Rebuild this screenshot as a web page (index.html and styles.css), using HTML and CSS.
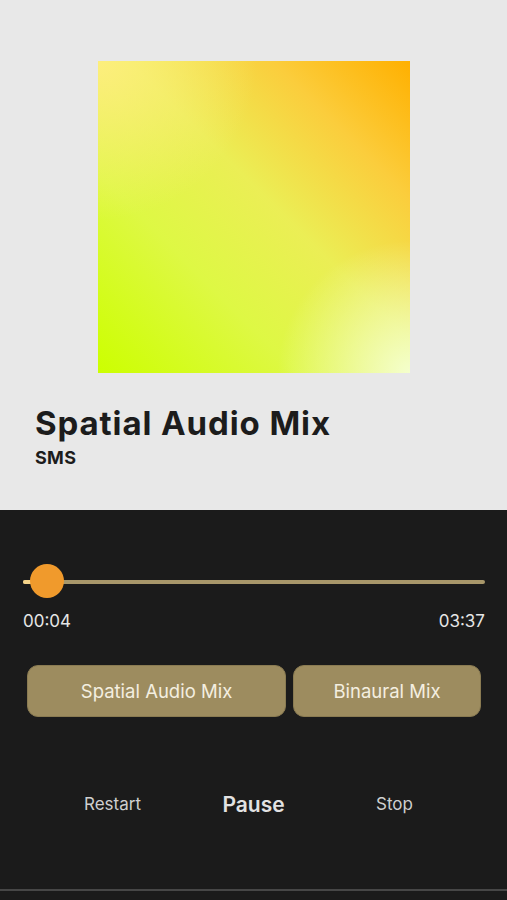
FILE: index.html
```html
<!DOCTYPE html>
<html lang="en">
<head>
<meta charset="utf-8">
<title>Spatial Audio Mix</title>
<link rel="stylesheet" href="styles.css">
</head>
<body>
<div class="screen">
  <section class="header">
    <div class="art"></div>
    <div class="meta">
      <h1 class="title">Spatial Audio Mix</h1>
      <div class="artist">SMS</div>
    </div>
  </section>
  <section class="player">
    <div class="slider">
      <div class="track"><div class="played"></div></div>
      <div class="thumb"></div>
    </div>
    <div class="times">
      <span>00:04</span>
      <span>03:37</span>
    </div>
    <div class="mixes">
      <button class="mix mix-spatial">Spatial Audio Mix</button>
      <button class="mix mix-binaural">Binaural Mix</button>
    </div>
    <div class="controls">
      <span class="ctrl">Restart</span>
      <span class="ctrl ctrl-main">Pause</span>
      <span class="ctrl">Stop</span>
    </div>
    <div class="home-line"></div>
  </section>
</div>
</body>
</html>
```
FILE: styles.css
```css
* { box-sizing: border-box; }
html, body { margin: 0; padding: 0; }
body {
  width: 507px;
  height: 900px;
  overflow: hidden;
  background: #1b1b1b;
  font-family: Inter, "Liberation Sans", sans-serif;
}
.screen {
  display: flex;
  flex-direction: column;
  height: 900px;
}
.header {
  background: #e8e8e8;
  height: 510px;
  padding-top: 61px;
  display: flex;
  flex-direction: column;
}
.art {
  width: 312px;
  height: 312px;
  margin-left: 98px;
  background:
    radial-gradient(circle at 100% 100%, rgba(244,255,205,1) 0%, rgba(244,255,205,0) 30%),
    radial-gradient(circle at 0% 0%, rgba(255,238,130,0.9) 0%, rgba(255,238,130,0) 36%),
    linear-gradient(45deg, #ccff00 0%, #def844 32%, #ebee55 55%, #fbcd3c 78%, #ffb000 100%);
}
.meta {
  padding-left: 35px;
  padding-top: 30px;
}
.title {
  margin: 0;
  font-family: Inter, "Noto Sans", sans-serif;
  font-weight: 700;
  font-size: 33px;
  line-height: 40px;
  color: #1c1c1c;
  letter-spacing: 0.9px;
}
.artist {
  font-family: Inter, "Noto Sans", sans-serif;
  font-weight: 700;
  font-size: 18px;
  line-height: 22px;
  color: #1c1c1c;
  margin-top: 4px;
  letter-spacing: 0.3px;
}
.player {
  flex: 1;
  display: flex;
  flex-direction: column;
  padding-top: 54px;
}
.slider {
  position: relative;
  margin: 0 22px 0 23px;
  height: 34px;
  display: flex;
  align-items: center;
}
.track {
  width: 100%;
  height: 4px;
  margin-top: 2px;
  border-radius: 2px;
  background: #a8976a;
}
.played {
  width: 24px;
  height: 4px;
  border-radius: 2px;
  background: #f5d48a;
}
.thumb {
  position: absolute;
  left: 7px;
  top: 0;
  width: 34px;
  height: 34px;
  border-radius: 50%;
  background: #f09a2c;
}
.times {
  display: flex;
  justify-content: space-between;
  margin: 13px 22px 0 23px;
  font-size: 17px;
  line-height: 20px;
  color: #e6e6e6;
}
.mixes {
  display: flex;
  gap: 7px;
  margin: 34px 0 0 27px;
}
.mix {
  height: 52px;
  border: 1px solid #8a7b52;
  border-radius: 11px;
  background: #9d8c5f;
  color: #f4efe0;
  font-family: Inter, "Liberation Sans", sans-serif;
  font-size: 18.5px;
  padding: 0;
}
.mix-spatial { width: 259px; }
.mix-binaural { width: 188px; }
.controls {
  display: grid;
  grid-template-columns: repeat(3, 141px);
  justify-content: center;
  align-items: center;
  margin-top: 72px;
  height: 30px;
  color: #cfcfcf;
  text-align: center;
}
.ctrl {
  font-size: 17px;
}
.ctrl-main {
  font-size: 21px;
  font-weight: 600;
  color: #e2e2e2;
}
.home-line {
  margin-top: auto;
  margin-bottom: 9px;
  height: 2px;
  background: #474747;
}
```
